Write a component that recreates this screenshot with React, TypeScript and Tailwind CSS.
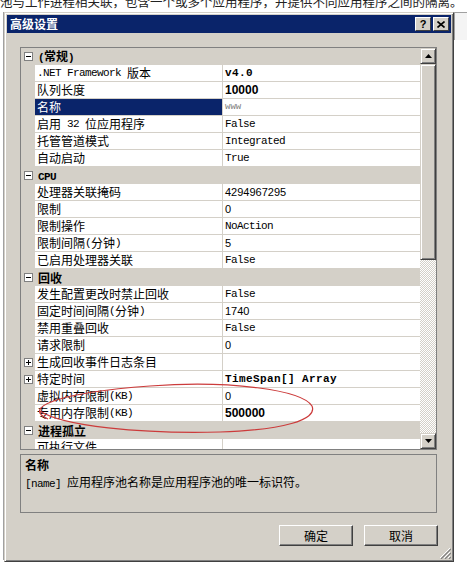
import React from 'react';

type Row = {
  cat?: string;
  name?: string;
  value?: string;
  style?: 'mono' | 'monoBold' | 'sans' | 'sansBold' | 'dim';
  selected?: boolean;
  expand?: boolean;
};

const rows: Row[] = [
  { cat: '(常规)' },
  { name: '.NET Framework 版本', value: 'v4.0', style: 'monoBold' },
  { name: '队列长度', value: '10000', style: 'sansBold' },
  { name: '名称', value: 'www', style: 'dim', selected: true },
  { name: '启用 32 位应用程序', value: 'False' },
  { name: '托管管道模式', value: 'Integrated' },
  { name: '自动启动', value: 'True' },
  { cat: 'CPU' },
  { name: '处理器关联掩码', value: '4294967295', style: 'sans' },
  { name: '限制', value: '0', style: 'sans' },
  { name: '限制操作', value: 'NoAction' },
  { name: '限制间隔(分钟)', value: '5', style: 'sans' },
  { name: '已启用处理器关联', value: 'False' },
  { cat: '回收' },
  { name: '发生配置更改时禁止回收', value: 'False' },
  { name: '固定时间间隔(分钟)', value: '1740', style: 'sans' },
  { name: '禁用重叠回收', value: 'False' },
  { name: '请求限制', value: '0', style: 'sans' },
  { name: '生成回收事件日志条目', value: '', expand: true },
  { name: '特定时间', value: 'TimeSpan[] Array', style: 'monoBold', expand: true },
  { name: '虚拟内存限制(KB)', value: '0', style: 'sans' },
  { name: '专用内存限制(KB)', value: '500000', style: 'sansBold' },
  { cat: '进程孤立' },
  { name: '可执行文件', value: '' },
];

// ASCII runs get the narrow mono face so they sit at half the CJK width
function Mixed({ text }: { text: string }) {
  const parts = text.split(/([\x20-\x7e]+)/).filter(Boolean);
  return (
    <>
      {parts.map((p, i) =>
        /[\x20-\x7e]/.test(p[0]) ? (
          <span key={i} className="font-['Liberation_Mono',monospace] text-[11px] tracking-[-0.6px] whitespace-pre">
            {p}
          </span>
        ) : (
          <span key={i}>{p}</span>
        )
      )}
    </>
  );
}

function Expander({ open }: { open: boolean }) {
  return (
    <span className="relative w-[9px] h-[9px] border border-[#808080] bg-white">
      <span className="absolute left-[1px] top-[3px] w-[5px] h-[1px] bg-black" />
      {!open && <span className="absolute left-[3px] top-[1px] w-[1px] h-[5px] bg-black" />}
    </span>
  );
}

function Value({ row }: { row: Row }) {
  const v = row.value || '';
  if (row.style === 'monoBold')
    return <span className="font-['Liberation_Mono',monospace] font-bold text-[11px] tracking-[0.4px]">{v}</span>;
  if (row.style === 'sansBold')
    return <span className="font-['Liberation_Sans',Arial,sans-serif] font-bold text-[12px]">{v}</span>;
  if (row.style === 'sans')
    return <span className="font-['Liberation_Sans',Arial,sans-serif] text-[11px]">{v}</span>;
  if (row.style === 'dim')
    return <span className="font-['Liberation_Mono',monospace] text-[9px] text-[#808080]">{v}</span>;
  return <span className="font-['Liberation_Mono',monospace] text-[11px] tracking-[-0.6px]">{v}</span>;
}

function ScrollButton({ down }: { down?: boolean }) {
  return (
    <div className="w-[16px] h-[16px] shrink-0 bg-[#d4d0c8] border border-t-[#d4d0c8] border-l-[#d4d0c8] border-r-[#404040] border-b-[#404040] shadow-[inset_1px_1px_0_#fff,inset_-1px_-1px_0_#808080] flex items-center justify-center">
      <svg width="7" height="4" viewBox="0 0 7 4">
        {down ? <path d="M0 0h7L3.5 4z" fill="#000" /> : <path d="M0 4h7L3.5 0z" fill="#000" />}
      </svg>
    </div>
  );
}

function Button({ label }: { label: string }) {
  return (
    <button className="w-[74px] h-[21px] bg-[#d4d0c8] border border-t-white border-l-white border-r-[#404040] border-b-[#404040] shadow-[inset_-1px_-1px_0_#808080] text-[12px] leading-[16px] text-black">
      {label}
    </button>
  );
}

export default function App() {
  return (
    <div className="relative w-[467px] h-[573px] overflow-hidden bg-white font-['Noto_Sans_CJK_SC',sans-serif] text-black">
      {/* window behind, only its bottom line of text shows */}
      <div className="h-[12px] overflow-hidden">
        <div className="mt-[-5px] text-[12.5px] leading-[14px] whitespace-nowrap text-[#222]">
          池与工作进程相关联，包含一个或多个应用程序，并提供不同应用程序之间的隔离。
        </div>
      </div>

      <div className="flex">
        <div className="w-[4px] h-[548px] border-r border-[#a0a0a0]" />

        {/* dialog */}
        <div className="w-[450px] h-[550px] bg-[#d4d0c8] border border-t-[#d4d0c8] border-l-[#d4d0c8] border-r-[#404040] border-b-[#404040] shadow-[inset_1px_1px_0_#fff,inset_-1px_-1px_0_#808080] p-[2px] flex flex-col">
          <div className="h-[18px] bg-[#0a246a] flex items-center pl-[3px] pr-[2px]">
            <span className="text-white font-bold text-[12px] leading-[16px]">高级设置</span>
            <div className="ml-auto flex gap-[2px]">
              <div className="w-[16px] h-[14px] bg-[#d4d0c8] border border-t-white border-l-white border-r-[#404040] border-b-[#404040] flex items-center justify-center text-[11px] font-bold font-['Liberation_Sans',Arial,sans-serif] leading-none">
                ?
              </div>
              <div className="w-[16px] h-[14px] bg-[#d4d0c8] border border-t-white border-l-white border-r-[#404040] border-b-[#404040] flex items-center justify-center">
                <svg width="8" height="7" viewBox="0 0 8 7">
                  <path d="M0.5 0.5l7 6M7.5 0.5l-7 6" stroke="#000" strokeWidth="1.6" />
                </svg>
              </div>
            </div>
          </div>

          <div className="pl-[13px] flex flex-col">
            {/* property grid */}
            <div className="mt-[14px] w-[417px] h-[403px] border border-[#808080] bg-white flex overflow-hidden">
              <div className="w-[399px] overflow-hidden flex flex-col text-[12px] leading-[16px]">
                {rows.map((r, i) =>
                  r.cat ? (
                    <div key={i} className="h-[17px] shrink-0 flex items-center bg-[#d4d0c8]">
                      <div className="w-[14px] flex items-center justify-center">
                        <Expander open />
                      </div>
                      <div className="pl-[3px] font-bold">
                        <Mixed text={r.cat} />
                      </div>
                    </div>
                  ) : (
                    <div key={i} className="h-[17px] shrink-0 flex">
                      <div className="w-[14px] shrink-0 bg-[#d4d0c8] flex items-center justify-center">
                        {r.expand && <Expander open={false} />}
                      </div>
                      <div
                        className={
                          r.selected
                            ? 'w-[188px] shrink-0 pl-[2px] flex items-center bg-[#0a246a] text-white border-r border-b border-r-[#d4d0c8] border-b-[#d4d0c8]'
                            : 'w-[188px] shrink-0 pl-[2px] flex items-center border-r border-b border-[#d4d0c8]'
                        }
                      >
                        <Mixed text={r.name || ''} />
                      </div>
                      <div className="flex-1 pl-[2px] flex items-center border-b border-[#d4d0c8] whitespace-pre">
                        <Value row={r} />
                      </div>
                    </div>
                  )
                )}
              </div>
              {/* scrollbar */}
              <div className="w-[16px] flex flex-col">
                <ScrollButton />
                <div className="h-[196px] shrink-0 bg-[#d4d0c8] border border-t-[#d4d0c8] border-l-[#d4d0c8] border-r-[#404040] border-b-[#404040] shadow-[inset_1px_1px_0_#fff,inset_-1px_-1px_0_#808080]" />
                <div className="flex-1 bg-[repeating-conic-gradient(#d4d0c8_0%_25%,#ffffff_0%_50%)] bg-size-[2px_2px]" />
                <ScrollButton down />
              </div>
            </div>

            {/* description */}
            <div className="mt-[4px] w-[417px] h-[59px] border border-[#808080] px-[4px] pt-[1px] text-[12px] leading-[17px]">
              <div className="font-bold">名称</div>
              <div>
                <Mixed text="[name] " />
                应用程序池名称是应用程序池的唯一标识符。
              </div>
            </div>

            <div className="mt-[12px] w-[418px] flex justify-end gap-[11px]">
              <Button label="确定" />
              <Button label="取消" />
            </div>
          </div>

          <div className="mt-auto flex justify-end">
            <svg width="12" height="12" viewBox="0 0 12 12">
              <path d="M11 1L1 11M11 5L5 11M11 9L9 11" stroke="#fff" strokeWidth="1" />
              <path d="M12 2L2 12M12 6L6 12M12 10L10 12" stroke="#808080" strokeWidth="1.2" />
            </svg>
          </div>
        </div>

        <div className="flex-1">
          <div className="h-[28px] border-t border-l border-[#a0a0a0] bg-[#f4f4f4]" />
        </div>
      </div>

      {/* red hand-drawn annotation */}
      <svg className="absolute left-0 top-0 pointer-events-none" width="467" height="573">
        <path
          d="M48 419 C 22 408, 55 393, 150 386 C 230 380, 302 390, 312 406 C 318 420, 282 430, 220 432 C 140 434, 62 426, 40 411"
          fill="none"
          stroke="#cc3b3b"
          strokeWidth="1.2"
        />
      </svg>
    </div>
  );
}
